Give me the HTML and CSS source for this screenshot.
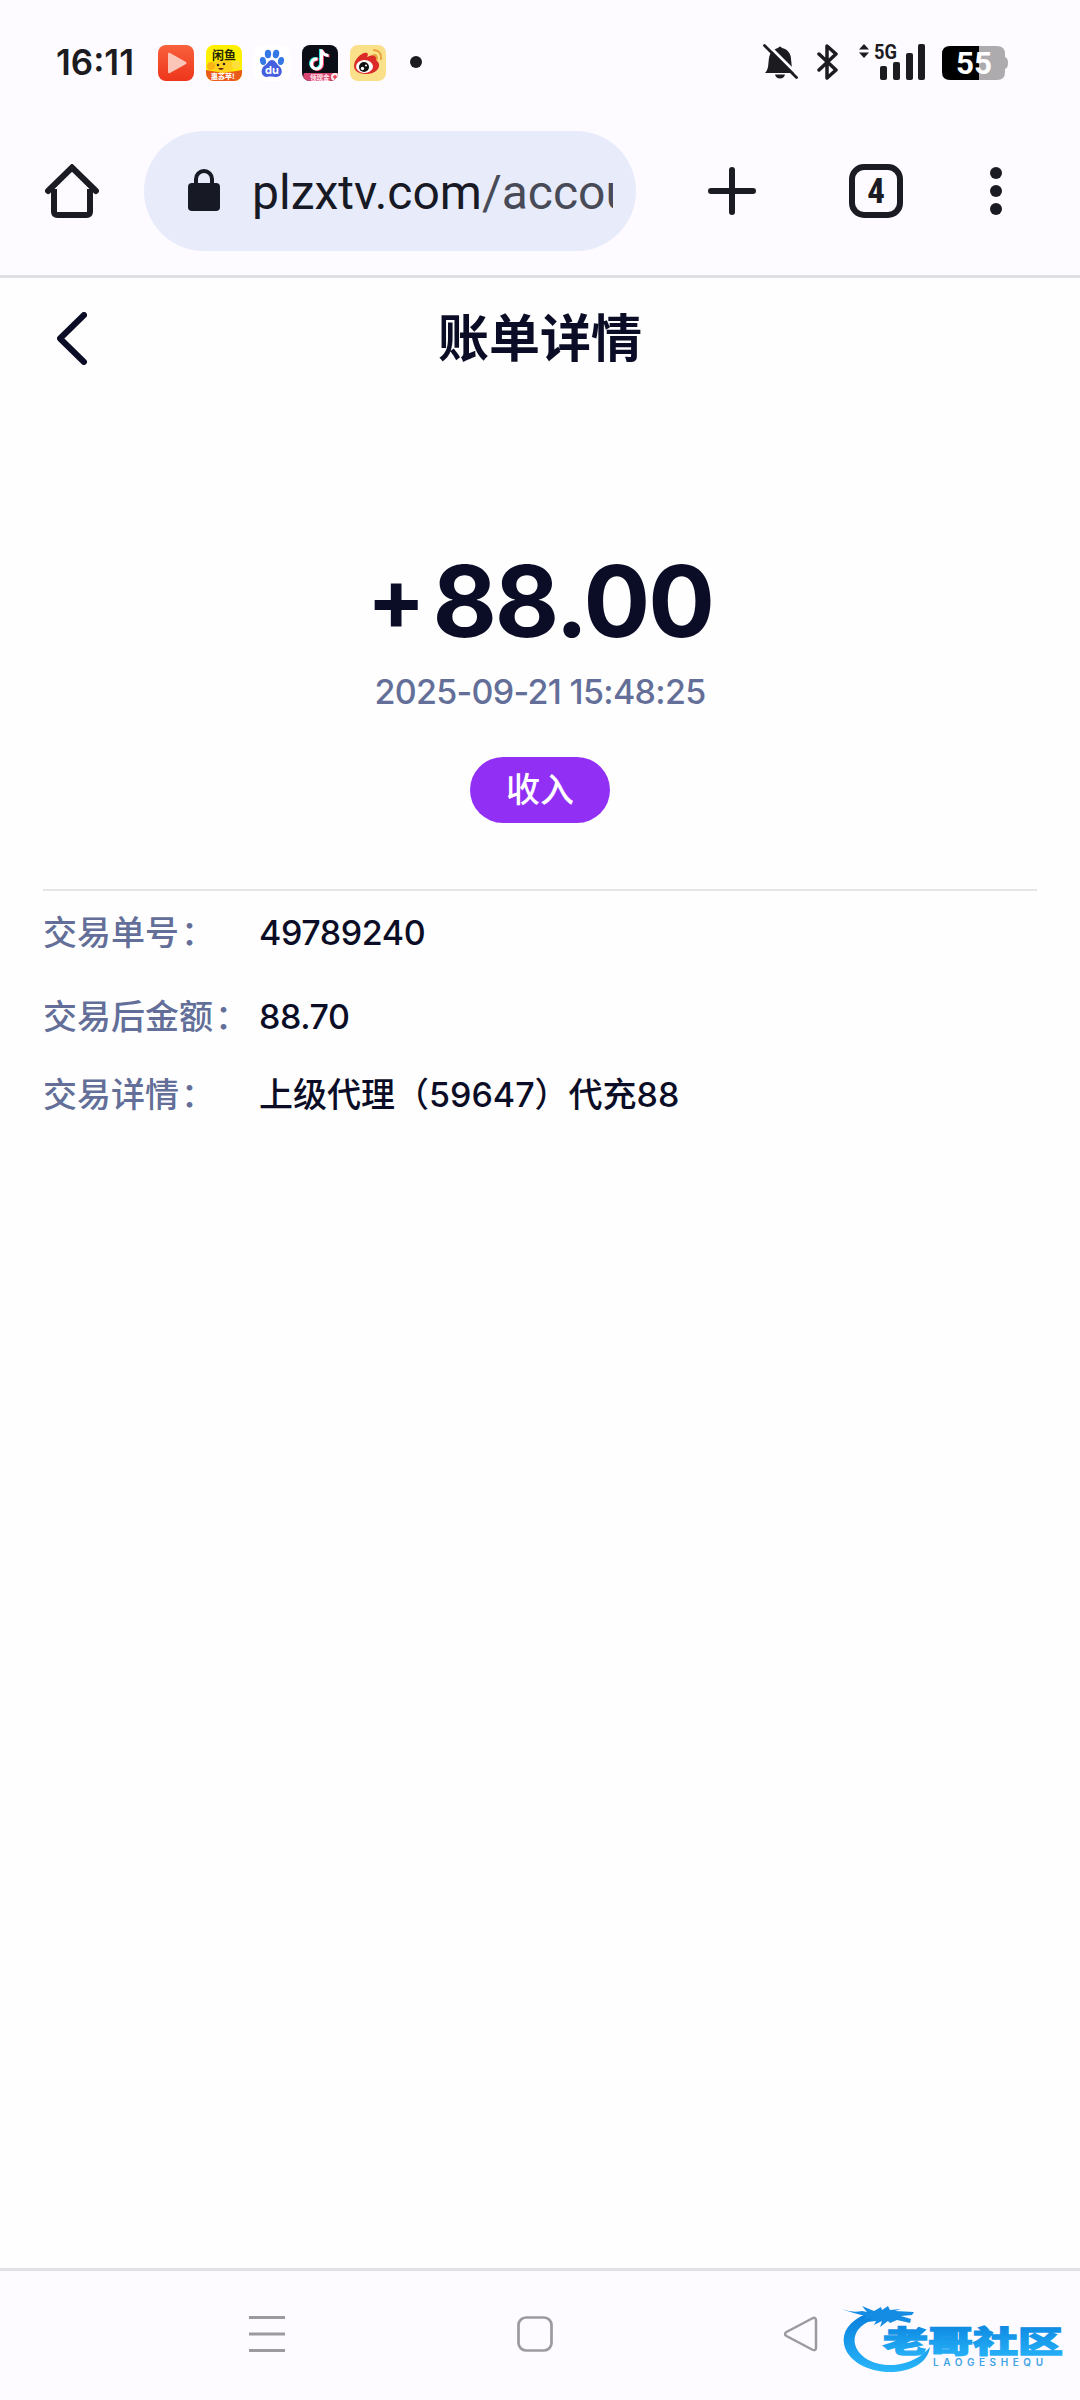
FILE: index.html
```html
<!DOCTYPE html>
<html lang="zh-CN">

<head>
    <meta charset="UTF-8">
    <meta name="viewport" content="width=device-width, initial-scale=1.0">
    <title>账单详情</title>
    <link rel="stylesheet" href="styles.css">
</head>

<body>
    <div class="status-bar">
        <span class="time">16:11</span>
        <div class="apps">
            <svg width="36" height="36" viewBox="0 0 36 36">
                <defs>
                    <linearGradient id="red" x1="0" y1="0" x2="0" y2="1">
                        <stop offset="0" stop-color="#f8613c"/>
                        <stop offset="1" stop-color="#ee351c"/>
                    </linearGradient>
                </defs>
                <rect width="36" height="36" rx="8" fill="url(#red)"/>
                <path d="M10 9v18q0 2 2 1l16-9q1-1 0-2L12 8q-2-1-2 1z" fill="#fbc5b8"/>
            </svg>
            <svg width="36" height="36" viewBox="0 0 36 36">
                <defs>
                    <clipPath id="tile"><rect width="36" height="36" rx="8"/></clipPath>
                </defs>
                <g clip-path="url(#tile)">
                    <rect width="36" height="36" fill="#fff000"/>
                    <path d="M0 25q18 4 36 0v11H0z" fill="#e95a1c"/>
                    <ellipse cx="17" cy="21" rx="11" ry="7" fill="#ffd21f"/>
                    <circle cx="5" cy="21" r="4" fill="#fbb315"/>
                    <circle cx="30" cy="20" r="4" fill="#ffdf3c"/>
                    <circle cx="12" cy="20" r="1.3" fill="#222"/>
                    <circle cx="18" cy="19" r="1.3" fill="#222"/>
                    <path d="M12 23q3 4 6 0z" fill="#6b2410"/>
                    <text x="6" y="15" class="cjk-bold" font-size="12" fill="#262600">闲鱼</text>
                    <text x="5" y="34" class="cjk-black" font-size="7" fill="#fff">惠苏苹!</text>
                </g>
            </svg>
            <svg width="36" height="36" viewBox="0 0 36 36">
                <rect width="36" height="36" rx="8" fill="#fff"/>
                <g fill="#3478e5">
                    <ellipse cx="9" cy="16" rx="3" ry="4" transform="rotate(-12 9 16)"/>
                    <ellipse cx="14" cy="9" rx="3.2" ry="4.200"/>
                    <ellipse cx="22" cy="9" rx="3.2" ry="4.200" transform="rotate(10 22 9)"/>
                    <ellipse cx="27" cy="16" rx="3" ry="4" transform="rotate(12 27 16)"/>
                    <path d="M18 15c3 0 4 3 7 6 4 3 4 10-2 11-3 0-7-1-10 0-6 0-7-7-3-11 4-2 4-6 8-6z" fill="#445fe0"/>
                </g>
                <text x="11" y="29" class="inter-bold" font-size="11" fill="#fff">du</text>
            </svg>
            <svg width="36" height="36" viewBox="0 0 36 36">
                <g clip-path="url(#tile)">
                    <rect width="36" height="36" fill="#0b0d17"/>
                    <g fill="none" stroke-width="3">
                        <path d="M18.500 4v14.500a5 5 0 1 1-4-5M18.500 5q2 5 7 5" stroke="#35e7e5"/>
                        <path d="M20.500 5v14.500a5 5 0 1 1-4-5M20.500 6q2 5 7 5" stroke="#ef3d66"/>
                        <path d="M19.500 4.500v14.500a5 5 0 1 1-4-5M19.500 5.500q2 5 7 5" stroke="#fff"/>
                    </g>
                    <path d="M2 28h34v8H0z" fill="#d54770"/>
                    <text x="8" y="35" class="cjk-black" font-size="6.500" fill="#ffdce5">领现金</text>
                    <circle cx="33" cy="32" r="4" fill="#ffe9ed"/>
                    <path d="M31 32h4M33 30v4" stroke="#e93d52" stroke-width="1.500"/>
                </g>
            </svg>
            <svg width="36" height="36" viewBox="0 0 36 36">
                <rect width="36" height="36" rx="8" fill="#fae088"/>
                <path d="M4 24c0-7 9-15 13-13 2 1 0 4 0 4s8-4 9 0c1 3 0 3 1 4 5 4 1 13-11 13C9 32 4 29 4 24z" fill="#dc2a26" transform="translate(0 -3)"/>
                <ellipse cx="14.500" cy="21.500" rx="8.500" ry="6.500" fill="#fff"/>
                <circle cx="14" cy="22" r="5" fill="#111"/>
                <circle cx="12.500" cy="23.500" r="1.700" fill="#fff"/>
                <circle cx="16" cy="20.500" r="1" fill="#fff"/>
                <path d="M24 5q8 1 7 9M24 10q3 0 3 4" fill="none" stroke="#e6a13b" stroke-width="2" stroke-linecap="round"/>
            </svg>
        </div>
        <span class="more-dot"></span>

        <svg class="bell" width="36" height="36" viewBox="0 0 36 36">
            <path d="M2 29c4-4 3-9 4-15 1-6 5-9 9-10q2-3 4 0c5 1 9 5 9 11 1 7 0 10 4 14z" fill="#1c1b1f"/>
            <path d="M12 30.500h10q-1 4-5 4t-5-4z" fill="#1c1b1f"/>
            <path d="M4 0l32 32" stroke="#fdfbff" stroke-width="3"/>
            <path d="M1.500 1.500l32 32" stroke="#1c1b1f" stroke-width="2.800" stroke-linecap="round"/>
        </svg>
        <svg class="bluetooth" width="22" height="36" viewBox="0 0 22 36">
            <path d="M2 10l17 16-9 8V2l9 8L2 26" fill="none" stroke="#1c1b1f" stroke-width="3.500" stroke-linecap="round" stroke-linejoin="round"/>
        </svg>
        <svg class="signal" width="68" height="38" viewBox="0 0 68 38">
            <g fill="#1c1b1f">
                <path d="M0 6.500L5 1l5 5.500zM0 9.500h10L5 15z"/>
                <text x="15" y="15.500" font-size="21" class="net" textLength="23" lengthAdjust="spacingAndGlyphs">5G</text>
                <rect x="21" y="23" width="7" height="14" rx="2"/>
                <rect x="34" y="19" width="7" height="18" rx="2"/>
                <rect x="47" y="10" width="7" height="27" rx="2"/>
                <rect x="59" y="1" width="7" height="36" rx="2"/>
            </g>
        </svg>
        <svg class="battery" width="66" height="34" viewBox="0 0 66 34">
            <path d="M37 0h18q8 0 8 8v3q3 1 3 6t-3 6v3q0 8-8 8H37z" fill="#aeabaf"/>
            <path d="M8 0h29v34H8q-8 0-8-8V8q0-8 8-8z" fill="#000"/>
            <text x="14" y="28" font-size="31" class="net" fill="#fff" textLength="36" lengthAdjust="spacingAndGlyphs">55</text>
        </svg>
    </div>

    <div class="toolbar">
        <svg class="home" width="54" height="54" viewBox="0 0 54 54">
            <path d="M9 25v22.500q0 3.500 3.500 3.500h29q3.500 0 3.500-3.500V25" fill="none" stroke="#1b1b23" stroke-width="6"/>
            <path d="M3 27L27 3.500 51 27" fill="none" stroke="#1b1b23" stroke-width="6" stroke-linecap="round"/>
        </svg>
        <div class="address">
            <svg width="32" height="42" viewBox="0 0 32 42">
                <rect y="14" width="32" height="28" rx="4" fill="#171925"/>
                <path d="M8 16v-6a8 8 0 0 1 16 0v6" fill="none" stroke="#171925" stroke-width="4"/>
            </svg>
            <div class="url">plzxtv.com<span>/accou</span></div>
        </div>
        <svg class="plus" width="48" height="48" viewBox="0 0 48 48">
            <path d="M24 3v42M3 24h42" stroke="#1b1b23" stroke-width="6" stroke-linecap="round"/>
        </svg>
        <div class="tabs">4</div>
        <div class="menu"><i></i><i></i><i></i></div>
    </div>

    <div class="page">
        <div class="header">
            <svg width="30" height="53" viewBox="0 0 30 53">
                <path d="M27 3L3 26.500 27 50" fill="none" stroke="#0b0d26" stroke-width="6" stroke-linecap="round" stroke-linejoin="round"/>
            </svg>
            <h1>账单详情</h1>
        </div>

        <div class="summary">
            <div class="amount"><span>+</span>88.00</div>
            <div class="date">2025-09-21 15:48:25</div>
            <div class="tag">收入</div>
        </div>

        <div class="details">
            <div class="row">
                <span class="label">交易单号<i>：</i></span>
                <span class="value number">49789240</span>
            </div>
            <div class="row">
                <span class="label">交易后金额<i>：</i></span>
                <span class="value number">88.70</span>
            </div>
            <div class="row last">
                <span class="label">交易详情<i>：</i></span>
                <span class="value">上级代理（59647）代充88</span>
            </div>
        </div>
    </div>

    <div class="nav-bar">
        <svg width="36" height="36" viewBox="0 0 36 36">
            <path d="M0 1.500h36M0 18h36M0 34.500h36" stroke="#9b9a9d" stroke-width="3"/>
        </svg>
        <svg width="36" height="36" viewBox="0 0 36 36">
            <rect x="1.500" y="1.500" width="33" height="33" rx="7.500" fill="none" stroke="#9b9a9d" stroke-width="2.700"/>
        </svg>
        <svg width="36" height="36" viewBox="0 0 36 36">
            <path d="M28 2.500L2.500 16q-3 2 0 4L28 33.500q4 2 4-2v-27q0-4-4-2z" fill="none" stroke="#9b9a9d" stroke-width="2.500"/>
        </svg>
    </div>

    <div class="watermark">
        <svg width="222" height="74" viewBox="0 0 222 74">
            <defs>
                <linearGradient id="blue" x1="0" y1="0" x2="0" y2="1">
                    <stop offset="0" stop-color="#087fdc"/>
                    <stop offset="1" stop-color="#29b6fa"/>
                </linearGradient>
            </defs>
            <path d="M24 10C7 17 0 28 2 40c3 17 25 29 49 28 20-1 35-10 37-25-7 9-21 17-36 18-20 1-36-8-39-21-2-12 6-21 23-26z" fill="url(#blue)"/>
            <path d="M0 5q10 4 20 2l5 1-5-6 12 5 7-4 1 3 6-4 2 4 11-1-6 2 19 1-2 3-11 1 10 3-1 4-13-3-7 3-2-2-8 6 2-6-8 4 2-4-8 1 3-4-8 2 3-4Q10 9 0 5z" fill="#148ce3"/>
            <text x="41" y="48" class="cjk-black" font-size="30" fill="url(#blue)" stroke="url(#blue)" stroke-width="1.300" textLength="180" lengthAdjust="spacingAndGlyphs">老哥社区</text>
            <text x="91" y="62" class="inter" font-size="10" font-weight="600" fill="#43a4e5" textLength="110">LAOGESHEQU</text>
        </svg>
    </div>
</body>

</html>
```
FILE: styles.css
```css
* {
    box-sizing: border-box;
}

body {
    margin: 0;
    width: 1080px;
    height: 2400px;
    display: flex;
    flex-direction: column;
    position: relative;
    overflow: hidden;
    background-color: #fefefe;
    font-family: Inter, "Noto Sans CJK SC", sans-serif;
    color: #0b0d26;
}

svg {
    display: block;
    flex-shrink: 0;
}

.cjk-bold {
    font-family: "Noto Sans CJK SC", sans-serif;
    font-weight: 700;
}

.cjk-black {
    font-family: "Noto Sans CJK SC", sans-serif;
    font-weight: 900;
}

.inter {
    font-family: Inter, sans-serif;
}

.inter-bold {
    font-family: Inter, sans-serif;
    font-weight: 700;
}

.net {
    font-family: Roboto, sans-serif;
    font-weight: 700;
}

.signal,
.battery {
    overflow: visible;
}

.status-bar {
    height: 110px;
    padding: 16px 72px 0 56px;
    display: flex;
    align-items: flex-start;
    background-color: #fdfbff;
}

.time {
    width: 102px;
    margin-top: 25px;
    font-size: 35px;
    font-weight: 600;
    line-height: 42px;
    color: #1c1b1f;
}

.apps {
    display: flex;
    gap: 12px;
    margin-top: 29px;
}

.more-dot {
    width: 12px;
    height: 12px;
    margin: 40px auto 0 24px;
    border-radius: 50%;
    background-color: #1c1b1f;
}

.bell,
.bluetooth {
    margin-top: 28px;
}

.bluetooth {
    margin-left: 18px;
}

.signal {
    margin-top: 27px;
    margin-left: 20px;
}

.battery {
    margin-top: 30px;
    margin-left: 15px;
}

.toolbar {
    height: 168px;
    padding: 0 78px 3px 45px;
    display: flex;
    align-items: center;
    background-color: #fdfbff;
    border-bottom: 3px solid #e0e0e4;
}

.address {
    width: 492px;
    height: 120px;
    margin-left: 45px;
    padding-left: 44px;
    display: flex;
    align-items: center;
    border-radius: 60px;
    background-color: #e7ebfa;
}

.address svg {
    margin-top: -2px;
}

.url {
    width: 361px;
    margin-top: 3px;
    margin-left: 32px;
    overflow: hidden;
    white-space: nowrap;
    font-family: Roboto, sans-serif;
    font-size: 48px;
    line-height: 64px;
    color: #171925;
}

.url span {
    color: #484b57;
}

.plus {
    margin-left: 72px;
}

.tabs {
    width: 54px;
    height: 54px;
    margin-left: 93px;
    border: 6px solid #1b1b23;
    border-radius: 15px;
    font-family: "Roboto Condensed", Roboto, sans-serif;
    font-size: 35px;
    font-weight: 700;
    line-height: 44px;
    text-align: center;
    color: #1b1b23;
}

.menu {
    margin-left: 87px;
    display: flex;
    flex-direction: column;
    gap: 6px;
}

.menu i {
    width: 12px;
    height: 12px;
    border-radius: 50%;
    background-color: #1b1b23;
}

.page {
    flex: 1;
}

.header {
    height: 121px;
    padding: 0 57px;
    display: flex;
    align-items: center;
}

.header h1 {
    flex: 1;
    margin: 0 30px 0 0;
    font-size: 51px;
    font-weight: 700;
    line-height: 74px;
    text-align: center;
}

.summary {
    height: 492px;
    margin: 0 43px;
    padding-top: 142px;
    display: flex;
    flex-direction: column;
    align-items: center;
    border-bottom: 2px solid #e5e5e8;
}

.amount {
    height: 120px;
    font-size: 99px;
    font-weight: 700;
    line-height: 120px;
    letter-spacing: -2px;
}

.amount span {
    margin-right: 9px;
    font-size: 86px;
    line-height: 0;
    vertical-align: 7px;
}

.date {
    margin-top: 10px;
    font-size: 34px;
    line-height: 42px;
    letter-spacing: -0.7px;
    font-weight: 500;
    color: #636f98;
}

.tag {
    width: 140px;
    height: 66px;
    margin-top: 44px;
    border-radius: 33px;
    background-color: #922ff5;
    color: #fff;
    font-size: 34px;
    font-weight: 500;
    line-height: 65px;
    text-align: center;
}

.details {
    padding: 0 43px;
}

.row {
    height: 84px;
    display: flex;
    align-items: center;
    font-size: 34px;
    font-weight: 500;
    line-height: 50px;
}

.row.last {
    height: 71px;
}

.label {
    width: 216px;
    flex-shrink: 0;
    color: #636f98;
}

.label i {
    margin-left: 2px;
    font-style: normal;
}

.value {
    white-space: nowrap;
}

.value.number {
    letter-spacing: -0.4px;
}

.nav-bar {
    height: 132px;
    padding: 45px 260px 0 249px;
    display: flex;
    justify-content: space-between;
    background-color: #fdfbff;
    border-top: 3px solid #e0e0e7;
}

.watermark {
    position: absolute;
    left: 842px;
    top: 2304px;
}
```
